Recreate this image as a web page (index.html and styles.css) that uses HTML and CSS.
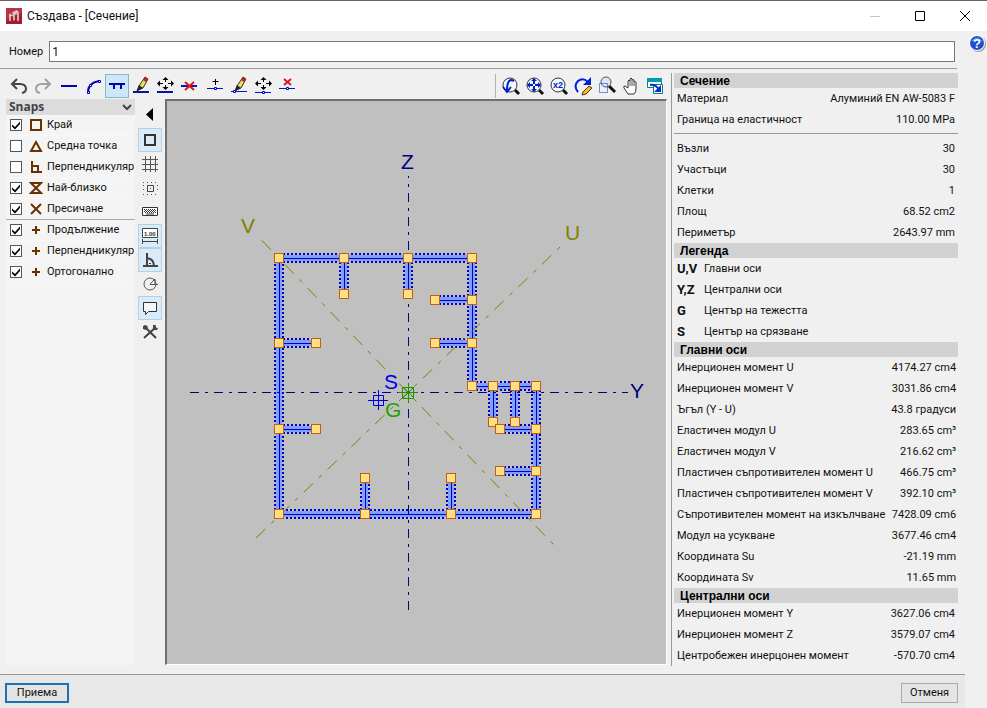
FILE: index.html
```html
<!DOCTYPE html>
<html lang="bg">
<head>
<meta charset="utf-8">
<title>Създава - [Сечение]</title>
<link rel="stylesheet" href="styles.css">
</head>
<body>
<header class="titlebar">
  <svg class="app-icon" viewBox="0 0 16 16" aria-hidden="true"><rect width="16" height="16" fill="#a51c2e"/><path d="M0 0h16v5L0 12z" fill="#bc3245"/><path d="M3 6l2-1v8H3zM6 4l5-2 2 2v9h-2V6l-2 1v5l-2 1V7z" fill="#cdb2b4"/><path d="M3 8l4-1 4-4" fill="none" stroke="#f1e6e6"/></svg>
  <h1 class="title">Създава - [Сечение]</h1>
  <div class="window-buttons">
    <button type="button" aria-label="Минимизиране" disabled><svg viewBox="0 0 12 12"><path d="M1 6.500h10" stroke="#c4c4c4"/></svg></button>
    <button type="button" aria-label="Максимизиране"><svg viewBox="0 0 12 12"><path d="M1.500 1.500h9v9h-9z" fill="none" stroke="#000"/></svg></button>
    <button type="button" aria-label="Затваряне"><svg viewBox="0 0 12 12"><path d="M1 1l10 10M11 1L1 11" fill="none" stroke="#000"/></svg></button>
  </div>
</header>
<div class="window">
  <div class="dialog">
    <div class="number-row">
      <label for="number">Номер</label>
      <input id="number" type="text" value="1">
    </div>
    <main class="workspace">
      <section class="editor">
        <div class="toolbar">
          <div class="tools">
            <button type="button" aria-label="Отмяна"><svg viewBox="0 0 24 24"><path d="M8 5L3 10l5 5M3 10h8q6 0 6 5q0 3-4 4" fill="none" stroke="#444" stroke-width="2"/></svg></button>
            <button type="button" aria-label="Повторение"><svg viewBox="0 0 24 24"><path d="M12 5l5 5-5 5M17 10H9q-6 0-6 5q0 3 4 4" fill="none" stroke="#a0a0a0" stroke-width="2"/></svg></button>
            <button type="button" aria-label="Линия"><svg viewBox="0 0 24 24"><path d="M4 12h16" stroke="#0000b4" stroke-width="2"/></svg></button>
            <button type="button" aria-label="Дъга"><svg viewBox="0 0 24 24"><path d="M7 18q0-9 11-11" fill="none" stroke="#0000b4" stroke-width="2"/><path d="M6.500 17.500h2v2h-2zM8.500 10.500h2v2h-2zM17.500 6.500h2v2h-2z" fill="#f0f0f0" stroke="#0000b4"/></svg></button>
            <button type="button" class="active" aria-label="Стена"><svg viewBox="0 0 24 24"><path d="M4 10h16M9 11v4M16 11v4" stroke="#0000b4" stroke-width="2"/></svg></button>
            <button type="button" aria-label="Редакция на линия"><svg viewBox="0 0 24 24"><path d="M4 18h16" stroke="#0018a0" stroke-width="2"/><use href="#pencil"/></svg></button>
            <button type="button" aria-label="Преместване на линия"><svg viewBox="0 0 24 24"><use href="#move"/><path d="M4 18h16" stroke="#0018a0" stroke-width="2"/></svg></button>
            <button type="button" aria-label="Изтриване на линия"><svg viewBox="0 0 24 24"><path d="M4 12h16" stroke="#0018c0" stroke-width="2"/><path d="M8 8l9 8M17 8l-9 8" stroke="#d81818" stroke-width="2"/></svg></button>
            <button type="button" aria-label="Нов възел"><svg viewBox="0 0 24 24"><path d="M14.500 5v6M11.500 7.500h6" stroke="#000"/><use href="#node-line"/></svg></button>
            <button type="button" aria-label="Редакция на възел"><svg viewBox="0 0 24 24"><path d="M6 17.500h16" stroke="#0018c0"/><g transform="translate(2 0)"><use href="#pencil"/></g><path d="M8.500 16.500h2v2h-2z" fill="#fff" stroke="#0000c0"/></svg></button>
            <button type="button" aria-label="Преместване на възел"><svg viewBox="0 0 24 24"><g transform="translate(2 0)"><use href="#move"/></g><path d="M6 18.500h16" stroke="#0018c0"/><path d="M13.500 17.500h2v2h-2z" fill="#fff" stroke="#0000c0"/></svg></button>
            <button type="button" aria-label="Изтриване на възел"><svg viewBox="0 0 24 24"><path d="M11 5l7 6M18 5l-7 6" stroke="#d81818" stroke-width="2"/><use href="#node-line"/></svg></button>
          </div>
          <div class="tools view-tools">
            <button type="button" aria-label="Предишен изглед"><svg viewBox="0 0 24 24"><use href="#lens"/><path d="M15 7Q8 3 8 17M4 13l4 5 4-5" fill="none" stroke="#0020c8" stroke-width="2"/></svg></button>
            <button type="button" aria-label="Покажи всичко"><svg viewBox="0 0 24 24"><use href="#lens"/><path d="M11 6v10M6 11h10" stroke="#0020c8" stroke-width="2" stroke-dasharray="4 2"/><path d="M11 4l3 3H8zM11 18l3-3H8zM4 11l3-3v6zM18 11l-3-3v6z" fill="#0020c8"/></svg></button>
            <button type="button" aria-label="Увеличение по две"><svg viewBox="0 0 24 24"><use href="#lens"/><text x="6" y="14" class="lens-text">x2</text></svg></button>
            <button type="button" aria-label="Опресняване"><svg viewBox="0 0 24 24"><path d="M7 18Q2 12 7 7q5-4 10 1" fill="none" stroke="#0020d8" stroke-width="2"/><path d="M20 3v8h-8z" fill="#0020d8"/><path d="M12 18l6-6 3 2-6 6-4 1z" fill="#f0c020" stroke="#5a3010"/></svg></button>
            <button type="button" aria-label="Увеличение на област"><svg viewBox="0 0 24 24"><path d="M14 12l6 6" stroke="#111" stroke-width="3"/><circle cx="11" cy="8" r="5" fill="#dce8f4" stroke="#555"/><path d="M4.500 9.500h8v9h-8z" fill="none" stroke="#0020d8" stroke-dasharray="1 1"/></svg></button>
            <button type="button" aria-label="Преместване на изгледа"><svg viewBox="0 0 24 24"><path d="M9 20L5 14q-1-2 1-2l3 2V7q1-2 2 0v-2q1-2 2 0v1q1-1 2 0v2q2-1 2 0v7q0 3-2 5z" fill="#fff" stroke="#333"/><path d="M11 7v5M13 6v6M15 8v4" stroke="#555"/></svg></button>
            <button type="button" aria-label="Прозорци"><svg viewBox="0 0 24 24"><path d="M4.500 4.500h14v9h-14z" fill="#fff" stroke="#087c94"/><path d="M4 4h15v4H4z" fill="#079ab0"/><path d="M10.500 10.500h9v9h-9z" fill="#fff" stroke="#087c94"/><path d="M7 11q6-1 9 5" fill="none" stroke="#0030c0" stroke-width="2"/><path d="M18 11v7h-7z" fill="#0030c0"/></svg></button>
          </div>
        </div>
        <div class="stage">
          <aside class="snaps">
            <h2>Snaps<svg viewBox="0 0 12 12" aria-hidden="true"><path d="M2 4l4 4 4-4" fill="none" stroke="#444" stroke-width="2"/></svg></h2>
            <label><input type="checkbox" checked><svg viewBox="0 0 14 14"><path d="M2 2h10v10H2z"/></svg>Край</label>
            <label><input type="checkbox"><svg viewBox="0 0 14 14"><path d="M7 3l5 9H2z"/></svg>Средна точка</label>
            <label><input type="checkbox"><svg viewBox="0 0 14 14"><path d="M3 1v11h10M3 6h6v6"/></svg>Перпендникуляр</label>
            <label><input type="checkbox" checked><svg viewBox="0 0 14 14"><path d="M2 2h10L2 12h10z"/></svg>Най-близко</label>
            <label class="group-end"><input type="checkbox" checked><svg viewBox="0 0 14 14"><path d="M2 2l10 10M12 2L2 12"/></svg>Пресичане</label>
            <label><input type="checkbox" checked><svg viewBox="0 0 14 14"><path d="M7 3v8M3 7h8"/></svg>Продължение</label>
            <label><input type="checkbox" checked><svg viewBox="0 0 14 14"><path d="M7 3v8M3 7h8"/></svg>Перпендникуляр</label>
            <label><input type="checkbox" checked><svg viewBox="0 0 14 14"><path d="M7 3v8M3 7h8"/></svg>Ортогонално</label>
          </aside>
          <div class="side-tools">
            <button type="button" aria-label="Свиване"><svg viewBox="0 0 24 24"><path d="M15 4v13L8 10.500z" fill="#000"/></svg></button>
            <button type="button" class="active" aria-label="Обекти"><svg viewBox="0 0 24 24"><path d="M7 7h10v10H7z" fill="none" stroke="#333" stroke-width="2"/></svg></button>
            <button type="button" aria-label="Мрежа"><svg viewBox="0 0 24 24"><path d="M7.500 4v16M12.500 4v16M17.500 4v16M4 7.500h16M4 12.500h16M4 17.500h16" stroke="#555"/></svg></button>
            <button type="button" aria-label="Стъпка"><svg viewBox="0 0 24 24"><path d="M9.500 9.500h6v6h-6zM12 12.500h1" fill="none" stroke="#444"/><path d="M5 6.500h15M5 18.500h15" stroke="#555" stroke-dasharray="1 3"/><path d="M5.500 9v8M19.500 9v8" stroke="#555" stroke-dasharray="1 3"/></svg></button>
            <button type="button" aria-label="Клавиатура"><svg viewBox="0 0 24 24"><path d="M4.500 7.500h15v8h-15z" fill="#fff" stroke="#333"/><path d="M6 9.500h12M7 10.500h12M6 11.500h12M7 12.500h12" stroke="#333" stroke-dasharray="1 1"/><path d="M8 14h8" stroke="#333"/></svg></button>
            <button type="button" class="active" aria-label="Размери"><svg viewBox="0 0 24 24"><path d="M4.500 4.500h15v9h-15z" fill="#fff" stroke="#444"/><text x="6" y="12" class="dim-text">1.00</text><path d="M4 17.500h16M4.500 15v5M19.500 15v5" stroke="#444"/></svg></button>
            <button type="button" class="active" aria-label="Ортогонално"><svg viewBox="0 0 24 24"><path d="M9 5v13M5 18h15M9 10q7 1 7 8" fill="none" stroke="#444" stroke-width="2"/><path d="M11 15h2v1h-2z" fill="#444"/></svg></button>
            <button type="button" aria-label="Полярно"><svg viewBox="0 0 24 24"><circle cx="12" cy="12" r="6" fill="none" stroke="#555"/><path d="M12 12.500h8M12 12l5-5v5" fill="none" stroke="#555"/></svg></button>
            <button type="button" class="active" aria-label="Съобщения"><svg viewBox="0 0 24 24"><path d="M5.500 6.500h13v9h-8l-3 3v-3h-2z" fill="#f4f8fc" stroke="#333"/></svg></button>
            <button type="button" aria-label="Настройки"><svg viewBox="0 0 24 24"><path d="M6 6l12 12M18 7L6 18" stroke="#444" stroke-width="2"/><path d="M5 6l3-1 2 2-2 3-3-1zM15 5l3 0-1 3 3 0-1 2-4 0z" fill="#444"/></svg></button>
          </div>
          <div class="canvas">
            <svg viewBox="167 101 499 563" role="img" aria-label="Сечение">
              <defs>
                <path id="walls" d="M279 258H472M472 258V386M472 386H536M536 386V514M536 514H279M279 514V258M344 258V294M408 258V294M435 300H472M435 343H472M279 343H316M279 429H316M493 386V422M515 386V422M500 429H536M500 471H536M365 514V478M451 514V478"/>
                <rect id="node" x="-4.500" y="-4.500" width="9" height="9"/>
              </defs>
              <use href="#walls" class="wall-edge"/>
              <use href="#walls" class="wall-fill"/>
              <use href="#walls" class="wall-axis"/>
              <path class="axis" d="M408.500 610V176M190 392.500H628"/>
              <path class="main-axis" d="M262 240.500L554 545M256 538L560 247"/>
              <g class="nodes">
                <use href="#node" x="279" y="258"/><use href="#node" x="344" y="258"/><use href="#node" x="408" y="258"/><use href="#node" x="472" y="258"/>
                <use href="#node" x="344" y="294"/><use href="#node" x="408" y="294"/><use href="#node" x="435" y="300"/><use href="#node" x="472" y="300"/>
                <use href="#node" x="435" y="343"/><use href="#node" x="472" y="343"/><use href="#node" x="279" y="343"/><use href="#node" x="316" y="343"/>
                <use href="#node" x="472" y="386"/><use href="#node" x="493" y="386"/><use href="#node" x="515" y="386"/><use href="#node" x="536" y="386"/>
                <use href="#node" x="493" y="422"/><use href="#node" x="515" y="422"/><use href="#node" x="500" y="429"/><use href="#node" x="536" y="429"/>
                <use href="#node" x="500" y="471"/><use href="#node" x="536" y="471"/><use href="#node" x="536" y="514"/><use href="#node" x="451" y="514"/>
                <use href="#node" x="451" y="478"/><use href="#node" x="365" y="514"/><use href="#node" x="365" y="478"/><use href="#node" x="279" y="514"/>
                <use href="#node" x="279" y="429"/><use href="#node" x="316" y="429"/>
              </g>
              <path class="shear" d="M373.500 395.500h10v10h-10zM378.500 390v20M368 400.500h20"/>
              <path class="gravity" d="M402.500 387.500h11v11h-11zM408.500 383v20M398 392.500h20M403 387l11 11M414 387l-11 11"/>
              <g class="axis-labels">
                <text x="401" y="169">Z</text><text x="630" y="398">Y</text>
                <text x="241" y="233" class="olive">V</text><text x="565" y="240" class="olive">U</text>
                <text x="384" y="389" class="blue">S</text><text x="385" y="417" class="green">G</text>
              </g>
            </svg>
          </div>
        </div>
      </section>
      <aside class="properties">
        <h2>Сечение</h2>
        <table class="ruled">
          <tr><th scope="row">Материал</th><td>Алуминий EN AW-5083 F</td></tr>
          <tr><th scope="row">Граница на еластичност</th><td>110.00 MPa</td></tr>
        </table>
        <table>
          <tr><th scope="row">Възли</th><td>30</td></tr>
          <tr><th scope="row">Участъци</th><td>30</td></tr>
          <tr><th scope="row">Клетки</th><td>1</td></tr>
          <tr><th scope="row">Площ</th><td>68.52 cm2</td></tr>
          <tr><th scope="row">Периметър</th><td>2643.97 mm</td></tr>
        </table>
        <h2>Легенда</h2>
        <dl class="legend">
          <dt>U,V</dt><dd>Главни оси</dd>
          <dt>Y,Z</dt><dd>Централни оси</dd>
          <dt>G</dt><dd>Център на тежестта</dd>
          <dt>S</dt><dd>Център на срязване</dd>
        </dl>
        <h2>Главни оси</h2>
        <table>
          <tr><th scope="row">Инерционен момент U</th><td>4174.27 cm4</td></tr>
          <tr><th scope="row">Инерционен момент V</th><td>3031.86 cm4</td></tr>
          <tr><th scope="row">Ъгъл (Y - U)</th><td>43.8 градуси</td></tr>
          <tr><th scope="row">Еластичен модул U</th><td>283.65 cm³</td></tr>
          <tr><th scope="row">Еластичен модул V</th><td>216.62 cm³</td></tr>
          <tr><th scope="row">Пластичен съпротивителен момент U</th><td>466.75 cm³</td></tr>
          <tr><th scope="row">Пластичен съпротивителен момент V</th><td>392.10 cm³</td></tr>
          <tr><th scope="row">Съпротивителен момент на изкълчване</th><td>7428.09 cm6</td></tr>
          <tr><th scope="row">Модул на усукване</th><td>3677.46 cm4</td></tr>
          <tr><th scope="row">Координата Su</th><td>-21.19 mm</td></tr>
          <tr><th scope="row">Координата Sv</th><td>11.65 mm</td></tr>
        </table>
        <h2>Централни оси</h2>
        <table>
          <tr><th scope="row">Инерционен момент Y</th><td>3627.06 cm4</td></tr>
          <tr><th scope="row">Инерционен момент Z</th><td>3579.07 cm4</td></tr>
          <tr><th scope="row">Центробежен инерцонен момент</th><td>-570.70 cm4</td></tr>
        </table>
      </aside>
    </main>
    <footer class="actions">
      <button type="button" class="accept">Приема</button>
      <button type="button" class="cancel">Отменя</button>
    </footer>
  </div>
  <div class="help-strip">
    <button type="button" aria-label="Помощ"><svg viewBox="0 0 18 18"><circle cx="10" cy="10" r="8" fill="#999"/><circle cx="9" cy="9" r="8" fill="#fff"/><circle cx="9" cy="9" r="7" fill="#1c50d0"/><path d="M3 7q6-7 12 0z" fill="#5c8cf0"/><text x="5" y="14" class="help-text">?</text></svg></button>
  </div>
</div>
<svg class="symbols" aria-hidden="true">
  <defs>
    <g id="pencil"><path d="M16 3l3 2-5 9-5 2 1-4z" fill="#e8e060" stroke="#333"/><path d="M16 3l3 2-2 3-3-2z" fill="#c02020"/><path d="M10 11l-3 7 7-4z" fill="#222"/></g>
    <g id="move"><path d="M12.500 5v3M12.500 11v3M6 9.500h4M15 9.500h4" stroke="#000"/><path d="M12.500 3l3 3h-6zM12.500 16l3-3h-6zM4 9.500l3-3v6zM21 9.500l-3-3v6z" fill="#000"/></g>
    <g id="node-line"><path d="M6 14.500h16" stroke="#0018c0"/><path d="M13.500 13.500h2v2h-2z" fill="#fff" stroke="#0000c0"/></g>
    <g id="lens"><path d="M16 16l4 4" stroke="#111" stroke-width="3"/><circle cx="11" cy="11" r="7" fill="#f4f8ff" stroke="#333"/></g>
  </defs>
</svg>
</body>
</html>
```
FILE: styles.css
```css
* { box-sizing: border-box; }
body {
  margin: 0;
  height: 100vh;
  min-height: 708px;
  display: flex;
  flex-direction: column;
  background: #f0f0f0;
  color: #111;
  font: 11px/16px Roboto, "Liberation Sans", sans-serif;
}
h1, h2, dl, dd { margin: 0; font-size: 12px; }
dd { font-size: 11px; }
svg { display: block; flex: none; }
button, input { font: inherit; color: inherit; margin: 0; }
button { padding: 0; border: 1px solid transparent; background: none; }

.titlebar {
  display: flex;
  align-items: center;
  flex: none;
  height: 31px;
  padding-left: 6px;
  border-top: 1px solid #666;
  background: #fff;
}
.app-icon { width: 16px; height: 16px; margin-right: 5px; }
.title { flex: 1; font: 12px/16px Roboto, sans-serif; }
.window-buttons { display: flex; }
.window-buttons button { width: 45px; height: 30px; display: grid; place-items: center; }
.window-buttons svg { width: 12px; height: 12px; }

.window { flex: 1; display: flex; }
.dialog { flex: 1; min-width: 0; display: flex; flex-direction: column; }
.help-strip { width: 22px; padding-top: 2px; }
.help-strip button { display: block; margin-left: 2px; }
.help-strip svg { width: 18px; height: 18px; }
.help-text { font: bold 13px "Liberation Sans", sans-serif; fill: #fff; }

.number-row {
  display: flex;
  align-items: center;
  gap: 6px;
  margin-right: 8px;
  padding: 10px 2px 6px 9px;
  border-bottom: 1px solid #999;
}
.number-row input {
  flex: 1;
  height: 21px;
  padding: 0 2px;
  border: 1px solid #777;
  background: #fff;
  font-size: 12px;
}

.workspace { flex: 1; display: flex; gap: 4px; padding: 4px 7px 8px 0; }
.editor { flex: 1; min-width: 0; display: flex; flex-direction: column; }
.toolbar { display: flex; justify-content: space-between; height: 26px; padding: 1px 0 1px 9px; }
.tools { display: flex; }
.view-tools { padding-left: 3px; border-left: 1px solid #b0b0b0; }
.tools button, .side-tools button { width: 24px; height: 24px; flex: none; }
.tools svg, .side-tools svg { width: 24px; height: 24px; margin: -1px; }
.active { background: #cce8f8; border-color: #8ab4cc; }
.lens-text { font: bold 9px "Liberation Sans", sans-serif; fill: #0020c8; }
.dim-text { font: bold 6px "Liberation Sans", sans-serif; fill: #333; }

.stage { flex: 1; display: flex; gap: 3px; padding: 0 0 1px 6px; }
.snaps { width: 129px; background: #f4f4f4; white-space: nowrap; }
.snaps h2 {
  display: flex;
  justify-content: space-between;
  align-items: center;
  height: 16px;
  padding: 0 2px 0 3px;
  background: #dcdcdc;
  color: #444;
  font: bold 12px/16px "Open Sans", sans-serif;
}
.snaps h2 svg { width: 12px; height: 12px; }
.snaps label { display: flex; align-items: center; height: 21px; padding-left: 4px; border-bottom: 1px solid #f8f8f8; }
.snaps .group-end { border-bottom-color: #aaa; }
.snaps input {
  appearance: none;
  flex: none;
  width: 12px;
  height: 12px;
  margin-right: 7px;
  border: 1px solid #555;
  background: #fff;
}
.snaps input:checked::after {
  content: "";
  display: block;
  width: 10px;
  height: 10px;
  background: #000;
  clip-path: polygon(10% 45%, 40% 70%, 90% 15%, 90% 40%, 40% 95%, 10% 65%);
}
.snaps label svg { width: 14px; height: 14px; margin-right: 4px; fill: none; stroke: #6a3000; stroke-width: 2; }
.side-tools { display: flex; flex-direction: column; width: 24px; padding-top: 5px; }
.side-tools .active { background: #d9ebf8; border-color: #b4d0e4; }
.canvas {
  flex: 1;
  min-width: 0;
  border: 2px solid #707070;
  border-right: 1px solid #fff;
  border-bottom: 1px solid #fff;
  background: #c0c0c0;
  display: grid;
}
.canvas svg { width: 100%; height: 100%; fill: none; }
.wall-edge { stroke: #0000c0; stroke-width: 10; stroke-dasharray: 2 2; shape-rendering: crispEdges; }
.wall-fill { stroke: #7f9fff; stroke-width: 6; shape-rendering: crispEdges; }
.wall-axis { stroke: #0000c0; stroke-width: 1; shape-rendering: crispEdges; }
.axis { stroke: #000080; stroke-dasharray: 9 6 3 6; shape-rendering: crispEdges; }
.main-axis { stroke: #808000; stroke-dasharray: 13 8 4 8; }
.nodes { fill: #ffdf80; stroke: #c06010; }
.shear { stroke: #0000e0; }
.gravity { stroke: #209000; }
.axis-labels { font: 21px "Liberation Sans", sans-serif; fill: #000080; }
.axis-labels .olive { fill: #808000; }
.axis-labels .blue { fill: #0000f0; }
.axis-labels .green { fill: #20a000; }

.properties { width: 287px; padding-left: 2px; border-left: 1px solid #999; white-space: nowrap; }
.properties h2 {
  height: 15px;
  padding-left: 6px;
  background: #d2d2d2;
  color: #000;
  font: bold 12px/16px "Liberation Sans", sans-serif;
}
.properties table { width: 100%; border-collapse: collapse; }
.properties th, .properties td { height: 21px; padding: 0 3px; font-weight: normal; text-align: left; }
.properties td { text-align: right; }
.ruled { margin-bottom: 8px; }
.ruled + table { position: relative; }
.ruled + table::before {
  content: "";
  position: absolute;
  top: -5px;
  left: 0;
  right: 0;
  border-top: 1px solid #999;
}
.legend { display: grid; grid-template-columns: 27px 1fr; grid-auto-rows: 21px; align-items: center; padding-left: 3px; }
.legend dt { font-size: 13px; font-weight: bold; }

.actions {
  display: flex;
  justify-content: space-between;
  height: 34px;
  padding: 8px 7px 5px 5px;
  border-top: 1px solid #999;
  background: #e8e8e8;
}
.actions button { border: 1px solid #aaa; background: #e4e4e4; }
.actions .accept { width: 64px; height: 20px; border: 2px solid #1f70b0; line-height: 14px; }
.actions .cancel { width: 57px; height: 20px; line-height: 16px; }
.symbols { position: absolute; width: 0; height: 0; }
```
